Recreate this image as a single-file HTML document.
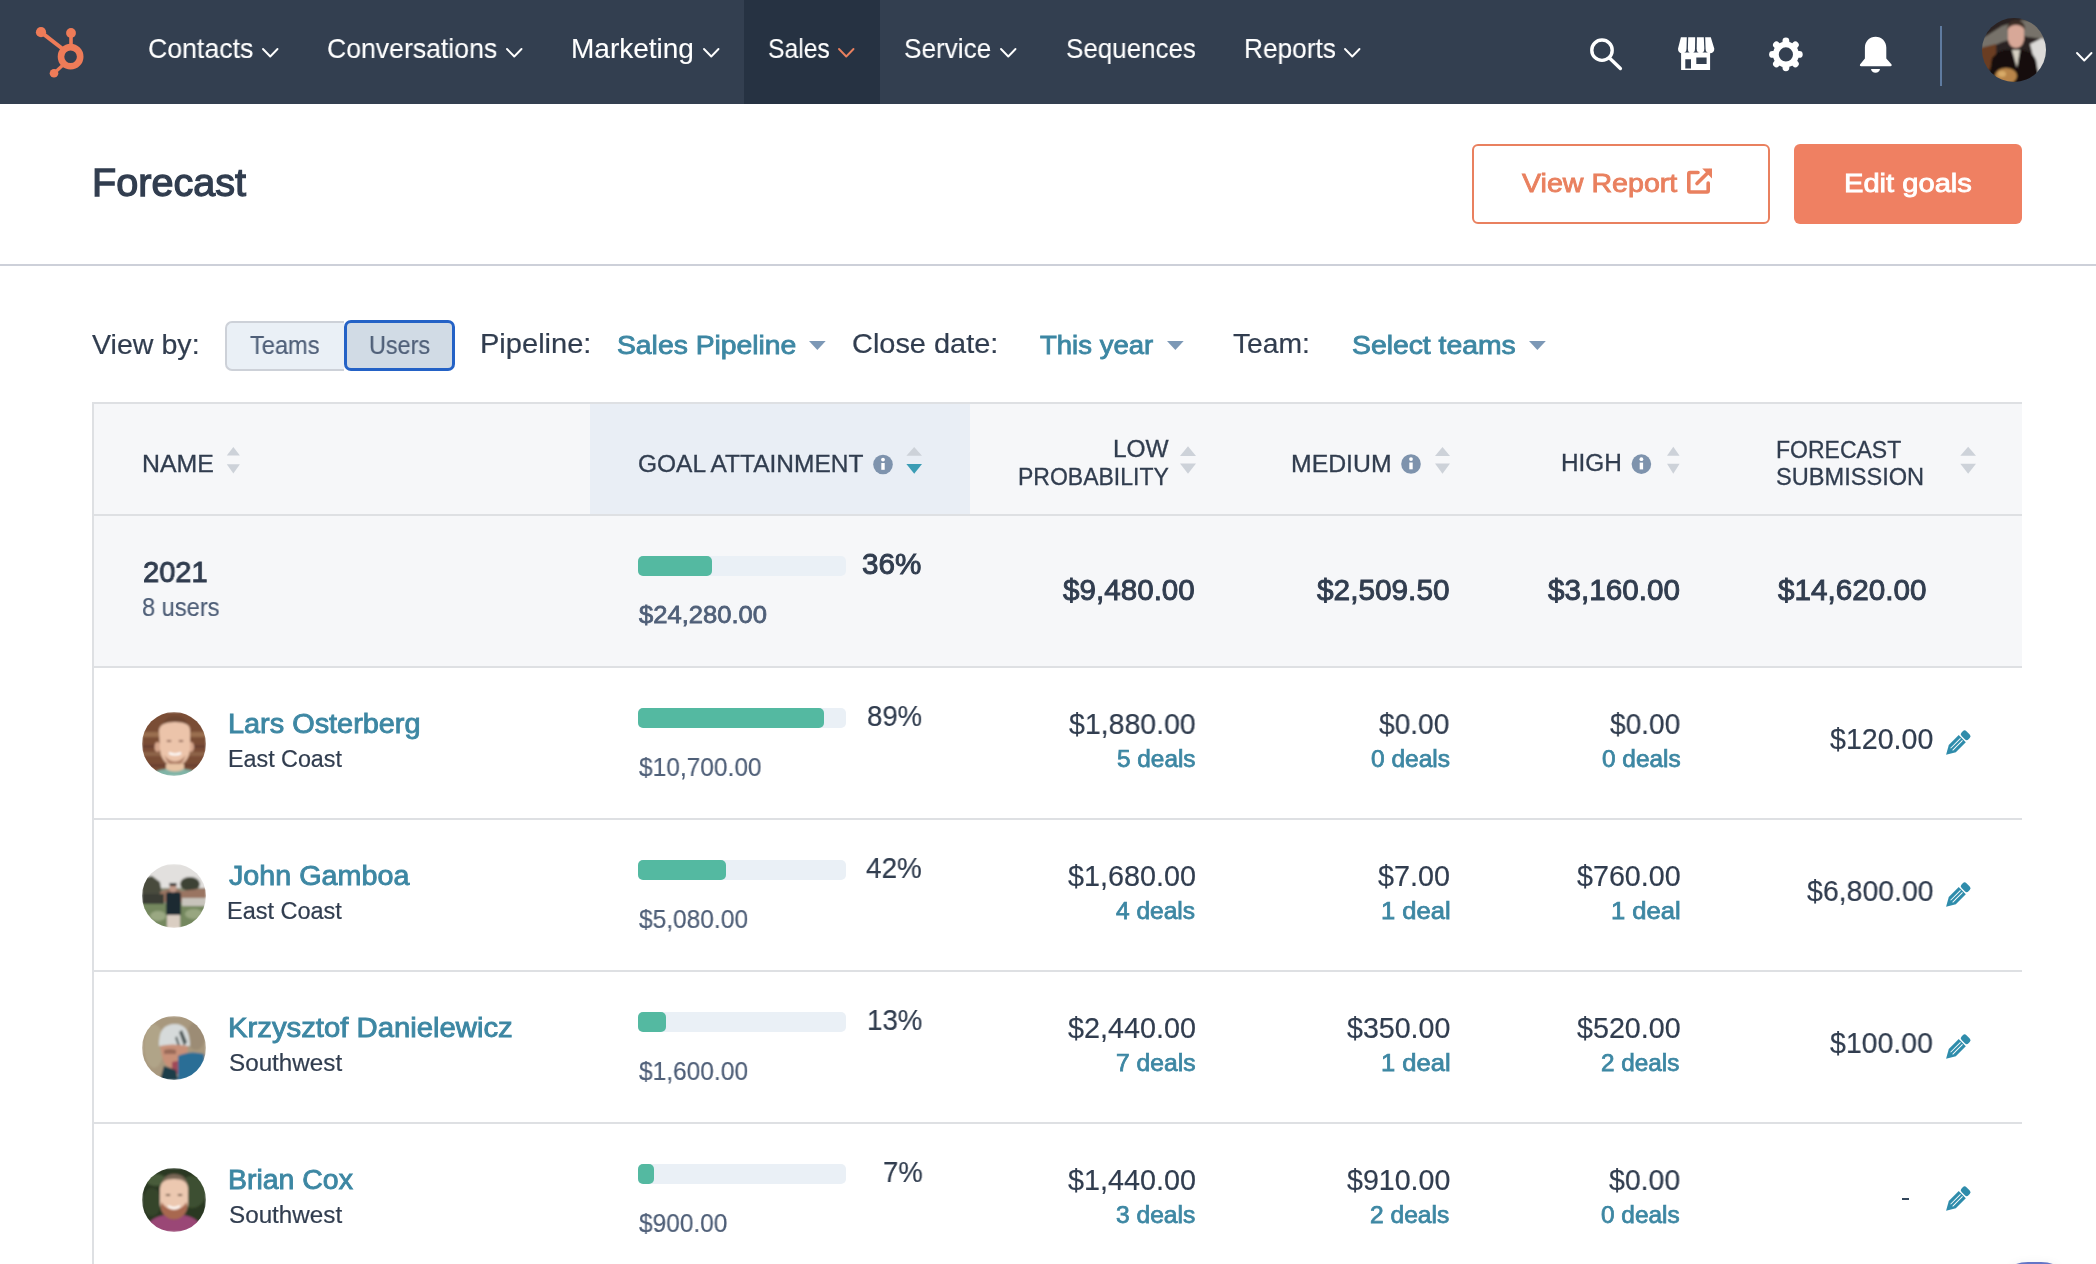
<!DOCTYPE html>
<html><head><meta charset="utf-8">
<style>
html,body{margin:0;padding:0;}
body{width:2096px;height:1264px;overflow:hidden;position:relative;background:#fff;font-family:"Liberation Sans",sans-serif;}
.a{position:absolute;display:block;}
.t{position:absolute;line-height:1;white-space:pre;transform-origin:0 0;will-change:transform;}
</style></head><body>
<!-- NAV -->
<div class="a" style="left:0;top:0;width:2096px;height:104px;background:#333f50"></div>
<div class="a" style="left:744px;top:0;width:136px;height:104px;background:#263242"></div>
<svg class="a" style="left:0;top:0" width="120" height="104">
 <g fill="#ee7b58" stroke="#ee7b58">
  <line x1="41" y1="32.2" x2="66" y2="51.5" stroke-width="4"/>
  <line x1="71" y1="33" x2="71" y2="46" stroke-width="3.6"/>
  <line x1="54" y1="73.3" x2="63" y2="65" stroke-width="3.2"/>
  <circle cx="41" cy="32.2" r="5.1" stroke="none"/>
  <circle cx="71" cy="33" r="4.9" stroke="none"/>
  <circle cx="54" cy="73.3" r="4.3" stroke="none"/>
  <circle cx="70.6" cy="56.7" r="9.6" fill="none" stroke-width="6.6"/>
 </g>
</svg>
<svg class="a" style="left:261px;top:46.5px" width="18.5" height="11.5"><polyline points="2,2 9.25,9.5 16.5,2" fill="none" stroke="#ffffff" stroke-width="1.9" stroke-linecap="round" stroke-linejoin="round"/></svg>
<svg class="a" style="left:505px;top:46.5px" width="18.5" height="11.5"><polyline points="2,2 9.25,9.5 16.5,2" fill="none" stroke="#ffffff" stroke-width="1.9" stroke-linecap="round" stroke-linejoin="round"/></svg>
<svg class="a" style="left:702px;top:46.5px" width="18.5" height="11.5"><polyline points="2,2 9.25,9.5 16.5,2" fill="none" stroke="#ffffff" stroke-width="1.9" stroke-linecap="round" stroke-linejoin="round"/></svg>
<svg class="a" style="left:998.5px;top:46.5px" width="18.5" height="11.5"><polyline points="2,2 9.25,9.5 16.5,2" fill="none" stroke="#ffffff" stroke-width="1.9" stroke-linecap="round" stroke-linejoin="round"/></svg>
<svg class="a" style="left:1343px;top:46.5px" width="18.5" height="11.5"><polyline points="2,2 9.25,9.5 16.5,2" fill="none" stroke="#ffffff" stroke-width="1.9" stroke-linecap="round" stroke-linejoin="round"/></svg>
<svg class="a" style="left:836.8px;top:46.5px" width="18.5" height="11.5"><polyline points="2,2 9.25,9.5 16.5,2" fill="none" stroke="#e8805f" stroke-width="1.9" stroke-linecap="round" stroke-linejoin="round"/></svg>
<svg class="a" style="left:2075px;top:50.5px" width="18.5" height="11.5"><polyline points="2,2 9.25,9.5 16.5,2" fill="none" stroke="#ffffff" stroke-width="1.9" stroke-linecap="round" stroke-linejoin="round"/></svg>
<!-- right icons -->
<svg class="a" style="left:1570px;top:20px" width="526" height="70">
 <g fill="none" stroke="#fff" stroke-width="3.4" stroke-linecap="round">
  <circle cx="32" cy="30.2" r="10.2"/>
  <line x1="40" y1="38.5" x2="50.4" y2="48.5"/>
 </g>
</svg>
<svg class="a" style="left:1670px;top:30px" width="52" height="48" viewBox="0 0 52 48">
 <g fill="#fff">
  <path d="M10.9 7.2 H16.8 L16.5 18.8 Q16.5 23.2 12.25 23.2 Q8 23.2 8 18.8 Z"/>
  <path d="M18.2 7.2 H25.2 L25 18.8 Q25 23.2 21.45 23.2 Q17.9 23.2 17.9 18.8 Z"/>
  <path d="M26.9 7.2 H33.8 L34.3 18.8 Q34.3 23.2 30.5 23.2 Q26.7 23.2 26.7 18.8 Z"/>
  <path d="M35.2 7.2 H40.8 L44.3 18.8 Q44.3 23.2 39.9 23.2 Q35.6 23.2 35.6 18.8 Z"/>
 </g>
 <path fill="#fff" fill-rule="evenodd" d="M11.1 22.4 H40.1 V40 H11.1 Z M15.3 29.3 V38.5 H21 V29.3 Z M26.3 27.4 V33.9 H36.6 V27.4 Z"/>
 
</svg>
<svg class="a" style="left:1760px;top:30px" width="52" height="50" viewBox="0 0 52 50">
 <g transform="translate(25.9 24.4)" fill="#fff">
  <path fill-rule="evenodd" d="M0 -13 A13 13 0 1 1 0 13 A13 13 0 1 1 0 -13 Z M0 -7.1 A7.1 7.1 0 1 0 0 7.1 A7.1 7.1 0 1 0 0 -7.1 Z"/>
  <g id="tooth"><rect x="-3.4" y="-16.8" width="6.8" height="7.4" rx="3.4"/></g>
  <use href="#tooth" transform="rotate(45)"/><use href="#tooth" transform="rotate(90)"/><use href="#tooth" transform="rotate(135)"/>
  <use href="#tooth" transform="rotate(180)"/><use href="#tooth" transform="rotate(225)"/><use href="#tooth" transform="rotate(270)"/><use href="#tooth" transform="rotate(315)"/>
 </g>
</svg>
<svg class="a" style="left:1850px;top:30px" width="50" height="50" viewBox="0 0 50 50">
 <path fill="#fff" d="M25.6 6.8 C31.6 6.8 36.3 11.5 36.3 17.5 V28.5 L41.6 34.5 Q42.2 36.2 40.5 36.2 H11 Q9.3 36.2 10 34.5 L14.9 28.5 V17.5 C14.9 11.5 19.6 6.8 25.6 6.8 Z"/>
 <path fill="#fff" d="M21 38.9 H30 Q29.2 42.7 25.5 42.7 Q21.8 42.7 21 38.9 Z"/>
</svg>
<div class="a" style="left:1940px;top:26px;width:2px;height:60px;background:#5f7ba0"></div>
<svg class="a" style="left:1982px;top:18px" width="64" height="64" viewBox="0 0 64 64">
 <defs><clipPath id="av0"><circle cx="32" cy="32" r="32"/></clipPath><filter id="fav0"><feGaussianBlur stdDeviation="0.8"/></filter></defs>
 <g clip-path="url(#av0)"><g filter="url(#fav0)">
  <rect x="-2" y="-2" width="68" height="68" fill="#2a2420"/>
  <path d="M-2 22 L20 8 L40 2 L66 4 L66 22 L40 18 L20 24 L-2 34Z" fill="#77726a"/>
  <path d="M-2 30 L14 26 L14 50 L-2 54Z" fill="#6a3e22"/>
  <path d="M48 26 L60 20 L66 24 L66 52 L56 58Z" fill="#dcdad8"/>
  <path d="M26 12 Q26 4 34 4 Q42 4 42 12 L42 22 Q40 30 34 30 Q28 30 26 22Z" fill="#d8a898"/>
  <path d="M25 12 Q26 2 34 2 Q43 2 43 12 Q40 7 34 7 Q28 7 25 12Z" fill="#3e2e26"/>
  <path d="M6 66 L10 40 Q18 30 30 32 L38 32 Q50 32 54 42 L58 66Z" fill="#141110"/>
  <path d="M30 32 L38 32 L35 50Z" fill="#d6d0c2"/>
  <ellipse cx="24" cy="58" rx="11" ry="8" fill="#b88448"/><ellipse cx="20" cy="56" rx="4" ry="3" fill="#d8aa68"/>
 </g></g>
</svg>

<!-- HEADER -->
<div class="a" style="left:1472px;top:144px;width:294px;height:76px;border:2px solid #e9805f;border-radius:6px;background:#fff"></div>
<svg class="a" style="left:1684px;top:166px" width="32" height="30" viewBox="0 0 32 30">
 <g fill="none" stroke="#e9805f" stroke-width="3.6" stroke-linecap="round" stroke-linejoin="round">
  <path d="M14 6.5 H6 Q4.8 6.5 4.8 7.7 V24.8 Q4.8 26 6 26 H23 Q24.2 26 24.2 24.8 V17"/>
  <path d="M13 17.5 L25.8 4.7"/>
 </g>
 <path fill="#e9805f" d="M18.2 2.6 H28 V12.4 Z"/>
</svg>
<div class="a" style="left:1794px;top:144px;width:228px;height:80px;background:#ef8062;border-radius:6px"></div>
<div class="a" style="left:0;top:264px;width:2096px;height:2px;background:#cdd0d9"></div>

<!-- FILTERS -->
<div class="a" style="left:225px;top:320.5px;width:117px;height:46.7px;background:#eaf0f6;border:2px solid #cdd1d8;border-right:none;border-radius:7px 0 0 7px"></div>
<div class="a" style="left:344px;top:320px;width:105px;height:45px;background:#d1dbe5;border:3px solid #2462c6;border-radius:7px"></div>
<svg class="a" style="left:800px;top:335px" width="1000" height="20">
 <g fill="#7c98b6">
  <path d="M9 6 H25.7 L17.35 15 Z"/>
  <path d="M367 6 H383.7 L375.35 15 Z"/>
  <path d="M729 6 H745.8 L737.4 15 Z"/>
 </g>
</svg>

<!-- TABLE -->
<div class="a" style="left:92px;top:402px;width:1930px;height:2px;background:#dee0e3"></div>
<div class="a" style="left:92px;top:402px;width:2px;height:862px;background:#dee0e3"></div>
<div class="a" style="left:94px;top:404px;width:1928px;height:110px;background:#f6f7f9"></div>
<div class="a" style="left:590px;top:404px;width:380px;height:110px;background:#e9eef5"></div>
<div class="a" style="left:94px;top:514px;width:1928px;height:2px;background:#dee0e3"></div>
<div class="a" style="left:94px;top:516px;width:1928px;height:150px;background:#f6f7f9"></div>
<div class="a" style="left:94px;top:666px;width:1928px;height:2px;background:#dee0e3"></div>
<div class="a" style="left:94px;top:818px;width:1928px;height:2px;background:#dee0e3"></div>
<div class="a" style="left:94px;top:970px;width:1928px;height:2px;background:#dee0e3"></div>
<div class="a" style="left:94px;top:1122px;width:1928px;height:2px;background:#dee0e3"></div>

<!-- sort icons & info -->
<svg class="a" style="left:0;top:430px" width="2096" height="60">
 <g fill="#cdd2d9">
  <path d="M226.8 25.6 L233.35 17 L239.9 25.6 Z"/><path d="M226.8 34.2 H239.9 L233.35 43.5 Z"/>
  <path d="M906.4 25.7 L914.2 17 L922 25.7 Z"/>
  <path d="M1180 26 L1188 16.3 L1196 26 Z"/><path d="M1180 33.5 H1196 L1188 43.8 Z"/>
  <path d="M1435 26 L1442.5 17 L1450 26 Z"/><path d="M1435 33.5 H1450 L1442.5 43.8 Z"/>
  <path d="M1667 25.8 L1673.3 16.7 L1679.6 25.8 Z"/><path d="M1667 33.7 H1679.6 L1673.3 43.7 Z"/>
  <path d="M1960.3 25.8 L1968.15 16.7 L1976 25.8 Z"/><path d="M1960.3 33.7 H1976 L1968.15 43.7 Z"/>
 </g>
 <path fill="#3b9db5" d="M906.4 33.9 H922 L914.2 43.7 Z"/>
 <g fill="#7e93ad">
  <circle cx="883" cy="34.5" r="9.8"/><circle cx="1411" cy="34" r="9.8"/><circle cx="1641.4" cy="34.1" r="9.8"/>
 </g>
 <g fill="#fff">
  <rect x="881.3" y="33" width="3.4" height="6.8"/><circle cx="883" cy="29.6" r="1.9"/>
  <rect x="1409.3" y="32.5" width="3.4" height="6.8"/><circle cx="1411" cy="29.1" r="1.9"/>
  <rect x="1639.7" y="32.6" width="3.4" height="6.8"/><circle cx="1641.4" cy="29.2" r="1.9"/>
 </g>
</svg>

<!-- progress bars -->
<div class="a" style="left:638px;top:556px;width:208px;height:20px;background:#eaf0f6;border-radius:5px"></div>
<div class="a" style="left:638px;top:556px;width:74px;height:20px;background:#54b9a1;border-radius:5px"></div>
<div class="a" style="left:638px;top:708px;width:208px;height:20px;background:#eaf0f6;border-radius:5px"></div>
<div class="a" style="left:638px;top:708px;width:185.8px;height:20px;background:#54b9a1;border-radius:5px"></div>
<div class="a" style="left:638px;top:860px;width:208px;height:20px;background:#eaf0f6;border-radius:5px"></div>
<div class="a" style="left:638px;top:860px;width:88.2px;height:20px;background:#54b9a1;border-radius:5px"></div>
<div class="a" style="left:638px;top:1012px;width:208px;height:20px;background:#eaf0f6;border-radius:5px"></div>
<div class="a" style="left:638px;top:1012px;width:28.0px;height:20px;background:#54b9a1;border-radius:5px"></div>
<div class="a" style="left:638px;top:1164px;width:208px;height:20px;background:#eaf0f6;border-radius:5px"></div>
<div class="a" style="left:638px;top:1164px;width:15.7px;height:20px;background:#54b9a1;border-radius:5px"></div>
<svg class="a" style="left:142px;top:712px" width="64" height="64" viewBox="0 0 64 64"><defs><clipPath id="c0"><circle cx="32" cy="32" r="32"/></clipPath><filter id="f0" x="-10%" y="-10%" width="120%" height="120%"><feGaussianBlur stdDeviation="0.9"/></filter></defs><g clip-path="url(#c0)"><g filter="url(#f0)"><rect width="64" height="64" fill="#7a4e36"/>
 <rect y="20" width="64" height="5" fill="#9a6e50"/><rect y="33" width="64" height="3" fill="#6a4030"/><rect y="40" width="64" height="4" fill="#8e6448"/><rect y="52" width="64" height="3" fill="#6a4030"/>
 <path d="M20 20 Q20 4 33 4 Q47 4 47 20 L46 14 Q40 10 33 10 Q25 10 20 15Z" fill="#6e4630"/>
 <ellipse cx="15.5" cy="35" rx="3" ry="5" fill="#d8a88e"/><ellipse cx="49" cy="35" rx="3" ry="5" fill="#d8a88e"/>
 <path d="M17 18 Q18 10 33 10 Q48 10 48 18 L48 38 Q46 53 33 54 Q20 53 18 38Z" fill="#ecc4aa"/>
 <path d="M22 43 Q33 56 44 43 Q40 54 33 55 Q26 54 22 43Z" fill="#b08068"/>
 <ellipse cx="27" cy="29" rx="2.5" ry="1" fill="#8a6050"/><ellipse cx="39" cy="29" rx="2.5" ry="1" fill="#8a6050"/>
 <path d="M27 41 Q33 44 39 41" stroke="#fff" stroke-width="2" fill="none"/>
 <rect x="24" y="52" width="18" height="10" fill="#e8c4a4"/>
 <path d="M8 64 Q12 58 24 57 Q33 62 42 57 Q54 58 58 64Z" fill="#80b4a6"/></g></g></svg>
<svg class="a" style="left:142px;top:864px" width="64" height="64" viewBox="0 0 64 64"><defs><clipPath id="c1"><circle cx="32" cy="32" r="32"/></clipPath><filter id="f1" x="-10%" y="-10%" width="120%" height="120%"><feGaussianBlur stdDeviation="0.9"/></filter></defs><g clip-path="url(#c1)"><g filter="url(#f1)"><rect width="64" height="64" fill="#8a8e78"/><rect width="64" height="24" fill="#e2e0de"/>
 <path d="M0 14 L10 12 L18 18 L20 30 L0 32Z" fill="#4a4c3e"/>
 <ellipse cx="48" cy="20" rx="10" ry="7" fill="#3e4234"/>
 <path d="M18 28 Q30 22 40 27 L64 24 L64 38 L18 38Z" fill="#9a7462"/>
 <rect x="0" y="30" width="22" height="14" fill="#3a3c34"/>
 <rect x="0" y="40" width="64" height="24" fill="#74885e"/>
 <ellipse cx="16" cy="52" rx="8" ry="5" fill="#9aa882"/><ellipse cx="52" cy="50" rx="9" ry="5" fill="#98a680"/>
 <path d="M40 34 L64 34 L64 42 L40 42Z" fill="#c8c4bc"/>
 <rect x="24" y="28" width="15" height="24" rx="3" fill="#1e2a30"/>
 <ellipse cx="31" cy="24" rx="3.5" ry="4.5" fill="#c09888"/><rect x="27.5" y="19" width="7" height="3" fill="#2a2a2a"/>
 <rect x="25" y="51" width="13" height="13" fill="#dacec2"/></g></g></svg>
<svg class="a" style="left:142px;top:1016px" width="64" height="64" viewBox="0 0 64 64"><defs><clipPath id="c2"><circle cx="32" cy="32" r="32"/></clipPath><filter id="f2" x="-10%" y="-10%" width="120%" height="120%"><feGaussianBlur stdDeviation="0.9"/></filter></defs><g clip-path="url(#c2)"><g filter="url(#f2)"><rect width="64" height="64" fill="#a8987e"/>
 <ellipse cx="12" cy="30" rx="10" ry="22" fill="#b0a488"/><ellipse cx="54" cy="20" rx="9" ry="14" fill="#9c8c74"/>
 <path d="M17 30 Q16 8 33 8 Q48 8 48 30Z" fill="#d6dada"/>
 <path d="M40 14 L45 26 L42 30 L37 16Z" fill="#505a5a"/><path d="M35 20 L39 32 L37 33 L33 22Z" fill="#606a6a"/>
 <path d="M18 30 Q30 27 46 30 L45 40 Q43 52 33 53 Q22 52 20 40Z" fill="#c89078"/>
 <path d="M22 34 Q28 32 34 34 L34 38 L22 38Z" fill="#9a6a58"/>
 <path d="M30 46 L40 44 L40 58 L30 58Z" fill="#a04858"/>
 <path d="M36 40 Q48 34 62 38 L64 64 L36 64Z" fill="#2a6e96"/>
 <path d="M18 64 L22 50 L34 54 L36 64Z" fill="#1e3c48"/></g></g></svg>
<svg class="a" style="left:142px;top:1168px" width="64" height="64" viewBox="0 0 64 64"><defs><clipPath id="c3"><circle cx="32" cy="32" r="32"/></clipPath><filter id="f3" x="-10%" y="-10%" width="120%" height="120%"><feGaussianBlur stdDeviation="0.9"/></filter></defs><g clip-path="url(#c3)"><g filter="url(#f3)"><rect width="64" height="64" fill="#2c3824"/>
 <ellipse cx="50" cy="24" rx="14" ry="16" fill="#3c5030"/><ellipse cx="10" cy="34" rx="9" ry="14" fill="#36442c"/><ellipse cx="14" cy="12" rx="10" ry="6" fill="#485c3a"/>
 <path d="M19 20 Q20 6 32 6 Q45 6 46 20 Q42 12 32 12 Q22 12 19 20Z" fill="#7a6856"/>
 <path d="M18 20 Q19 11 32 11 Q45 11 46 20 L46 36 Q44 50 32 51 Q20 50 18 36Z" fill="#ecc8b0"/>
 <path d="M19 34 Q32 50 45 34 L45 40 Q42 52 32 52 Q22 52 19 40Z" fill="#a86850"/>
 <ellipse cx="26" cy="27" rx="2.5" ry="1" fill="#6a5040"/><ellipse cx="38" cy="27" rx="2.5" ry="1" fill="#6a5040"/>
 <path d="M26 38 Q32 42 38 38" stroke="#fff" stroke-width="2" fill="none"/>
 <path d="M2 64 Q6 50 22 47 Q32 56 42 47 Q58 50 62 64Z" fill="#9a4676"/></g></g></svg>
<svg class="a" style="left:1936px;top:720px" width="44" height="44" viewBox="0 0 44 44">
 <g transform="translate(10.3 34.6) rotate(45)">
  <path fill="#2f8cab" d="M0 0.3 L-5 -8.5 V-22.6 H5 V-8.5 Z"/>
  <rect x="-4.9" y="-30.8" width="9.8" height="6.9" rx="2.6" fill="#2f8cab"/>
  <rect x="-1.9" y="-21.5" width="0.9" height="14" fill="#fff"/>
  <rect x="1.0" y="-21.5" width="0.9" height="14" fill="#fff"/>
 </g>
</svg>
<svg class="a" style="left:1936px;top:872px" width="44" height="44" viewBox="0 0 44 44">
 <g transform="translate(10.3 34.6) rotate(45)">
  <path fill="#2f8cab" d="M0 0.3 L-5 -8.5 V-22.6 H5 V-8.5 Z"/>
  <rect x="-4.9" y="-30.8" width="9.8" height="6.9" rx="2.6" fill="#2f8cab"/>
  <rect x="-1.9" y="-21.5" width="0.9" height="14" fill="#fff"/>
  <rect x="1.0" y="-21.5" width="0.9" height="14" fill="#fff"/>
 </g>
</svg>
<svg class="a" style="left:1936px;top:1024px" width="44" height="44" viewBox="0 0 44 44">
 <g transform="translate(10.3 34.6) rotate(45)">
  <path fill="#2f8cab" d="M0 0.3 L-5 -8.5 V-22.6 H5 V-8.5 Z"/>
  <rect x="-4.9" y="-30.8" width="9.8" height="6.9" rx="2.6" fill="#2f8cab"/>
  <rect x="-1.9" y="-21.5" width="0.9" height="14" fill="#fff"/>
  <rect x="1.0" y="-21.5" width="0.9" height="14" fill="#fff"/>
 </g>
</svg>
<svg class="a" style="left:1936px;top:1176px" width="44" height="44" viewBox="0 0 44 44">
 <g transform="translate(10.3 34.6) rotate(45)">
  <path fill="#2f8cab" d="M0 0.3 L-5 -8.5 V-22.6 H5 V-8.5 Z"/>
  <rect x="-4.9" y="-30.8" width="9.8" height="6.9" rx="2.6" fill="#2f8cab"/>
  <rect x="-1.9" y="-21.5" width="0.9" height="14" fill="#fff"/>
  <rect x="1.0" y="-21.5" width="0.9" height="14" fill="#fff"/>
 </g>
</svg>
<div class="t" style="left:147.67px;top:34.60px;font-size:28.00px;color:#ffffff;-webkit-text-stroke:0.1px #ffffff;transform:scaleX(0.9530);">Contacts</div>
<div class="t" style="left:326.67px;top:34.60px;font-size:28.00px;color:#ffffff;-webkit-text-stroke:0.1px #ffffff;transform:scaleX(0.9509);">Conversations</div>
<div class="t" style="left:570.76px;top:34.60px;font-size:28.00px;color:#ffffff;-webkit-text-stroke:0.1px #ffffff;">Marketing</div>
<div class="t" style="left:768.01px;top:34.60px;font-size:28.00px;color:#ffffff;-webkit-text-stroke:0.1px #ffffff;transform:scaleX(0.8818);">Sales</div>
<div class="t" style="left:903.95px;top:34.60px;font-size:28.00px;color:#ffffff;-webkit-text-stroke:0.1px #ffffff;transform:scaleX(0.9341);">Service</div>
<div class="t" style="left:1065.96px;top:34.60px;font-size:28.00px;color:#ffffff;-webkit-text-stroke:0.1px #ffffff;transform:scaleX(0.9273);">Sequences</div>
<div class="t" style="left:1243.90px;top:34.60px;font-size:28.00px;color:#ffffff;-webkit-text-stroke:0.1px #ffffff;transform:scaleX(0.9376);">Reports</div>
<div class="t" style="left:92.03px;top:162.53px;font-size:39.50px;color:#313d4f;-webkit-text-stroke:1.27px #313d4f;transform:scaleX(1.0027);">Forecast</div>
<div class="t" style="left:1522.37px;top:169.70px;font-size:26.00px;color:#e9805f;-webkit-text-stroke:0.84px #e9805f;transform:scaleX(1.1003);">View Report</div>
<div class="t" style="left:1843.76px;top:169.90px;font-size:26.00px;color:#ffffff;-webkit-text-stroke:0.84px #ffffff;transform:scaleX(1.1199);">Edit goals</div>
<div class="t" style="left:92.40px;top:330.62px;font-size:27.50px;color:#313d4f;-webkit-text-stroke:0.2px #313d4f;transform:scaleX(1.0404);">View by:</div>
<div class="t" style="left:249.93px;top:332.75px;font-size:25.00px;color:#4f5f78;-webkit-text-stroke:0.2px #4f5f78;transform:scaleX(0.9426);">Teams</div>
<div class="t" style="left:368.86px;top:332.75px;font-size:25.00px;color:#4f5f78;-webkit-text-stroke:0.2px #4f5f78;transform:scaleX(0.9355);">Users</div>
<div class="t" style="left:480.08px;top:330.43px;font-size:27.50px;color:#313d4f;-webkit-text-stroke:0.2px #313d4f;transform:scaleX(1.0562);">Pipeline:</div>
<div class="t" style="left:617.35px;top:331.53px;font-size:26.20px;color:#3d87a3;-webkit-text-stroke:0.84px #3d87a3;transform:scaleX(1.0806);">Sales Pipeline</div>
<div class="t" style="left:852.05px;top:330.43px;font-size:27.50px;color:#313d4f;-webkit-text-stroke:0.2px #313d4f;transform:scaleX(1.0517);">Close date:</div>
<div class="t" style="left:1040.32px;top:331.53px;font-size:26.20px;color:#3d87a3;-webkit-text-stroke:0.84px #3d87a3;transform:scaleX(1.0510);">This year</div>
<div class="t" style="left:1233.44px;top:330.43px;font-size:27.50px;color:#313d4f;-webkit-text-stroke:0.2px #313d4f;transform:scaleX(1.0271);">Team:</div>
<div class="t" style="left:1352.15px;top:331.53px;font-size:26.20px;color:#3d87a3;-webkit-text-stroke:0.84px #3d87a3;transform:scaleX(1.0818);">Select teams</div>
<div class="t" style="left:141.81px;top:452.55px;font-size:23.00px;color:#313d4f;-webkit-text-stroke:0.3px #313d4f;transform:scaleX(1.0815);">NAME</div>
<div class="t" style="left:637.72px;top:452.75px;font-size:23.00px;color:#313d4f;-webkit-text-stroke:0.3px #313d4f;transform:scaleX(1.0649);">GOAL ATTAINMENT</div>
<div class="t" style="left:1112.54px;top:438.25px;font-size:23.00px;color:#313d4f;-webkit-text-stroke:0.3px #313d4f;transform:scaleX(1.0632);">LOW</div>
<div class="t" style="left:1017.66px;top:466.45px;font-size:23.00px;color:#313d4f;-webkit-text-stroke:0.3px #313d4f;">PROBABILITY</div>
<div class="t" style="left:1291.02px;top:452.65px;font-size:23.00px;color:#313d4f;-webkit-text-stroke:0.3px #313d4f;transform:scaleX(1.0780);">MEDIUM</div>
<div class="t" style="left:1560.75px;top:452.45px;font-size:23.00px;color:#313d4f;-webkit-text-stroke:0.3px #313d4f;transform:scaleX(1.0583);">HIGH</div>
<div class="t" style="left:1775.56px;top:438.65px;font-size:23.00px;color:#313d4f;-webkit-text-stroke:0.3px #313d4f;transform:scaleX(0.9980);">FORECAST</div>
<div class="t" style="left:1776.46px;top:466.05px;font-size:23.00px;color:#313d4f;-webkit-text-stroke:0.3px #313d4f;transform:scaleX(1.0253);">SUBMISSION</div>
<div class="t" style="left:142.73px;top:557.12px;font-size:29.50px;color:#313d4f;-webkit-text-stroke:0.95px #313d4f;transform:scaleX(0.9840);">2021</div>
<div class="t" style="left:142.26px;top:594.65px;font-size:25.00px;color:#4f5f78;-webkit-text-stroke:0.2px #4f5f78;transform:scaleX(0.9445);">8 users</div>
<div class="t" style="left:862.11px;top:548.91px;font-size:29.40px;color:#313d4f;-webkit-text-stroke:0.95px #313d4f;transform:scaleX(1.0083);">36%</div>
<div class="t" style="left:639.26px;top:603.09px;font-size:24.60px;color:#4f5f78;-webkit-text-stroke:0.79px #4f5f78;transform:scaleX(1.0395);">$24,280.00</div>
<div class="t" style="left:1063.00px;top:575.69px;font-size:28.60px;color:#313d4f;-webkit-text-stroke:0.92px #313d4f;transform:scaleX(1.0364);">$9,480.00</div>
<div class="t" style="left:1317.30px;top:575.69px;font-size:28.60px;color:#313d4f;-webkit-text-stroke:0.92px #313d4f;transform:scaleX(1.0419);">$2,509.50</div>
<div class="t" style="left:1548.10px;top:575.69px;font-size:28.60px;color:#313d4f;-webkit-text-stroke:0.92px #313d4f;transform:scaleX(1.0371);">$3,160.00</div>
<div class="t" style="left:1778.00px;top:575.69px;font-size:28.60px;color:#313d4f;-webkit-text-stroke:0.92px #313d4f;transform:scaleX(1.0370);">$14,620.00</div>
<div class="t" style="left:228.28px;top:711.02px;font-size:26.80px;color:#3d87a3;-webkit-text-stroke:0.86px #3d87a3;transform:scaleX(1.0772);">Lars Osterberg</div>
<div class="t" style="left:228.44px;top:747.90px;font-size:23.30px;color:#313d4f;-webkit-text-stroke:0.2px #313d4f;">East Coast</div>
<div class="t" style="left:866.50px;top:700.80px;font-size:30.00px;color:#313d4f;-webkit-text-stroke:0.2px #313d4f;transform:scaleX(0.9188);">89%</div>
<div class="t" style="left:638.76px;top:754.54px;font-size:25.60px;color:#4f5f78;-webkit-text-stroke:0.2px #4f5f78;transform:scaleX(0.9569);">$10,700.00</div>
<div class="t" style="left:1068.72px;top:709.69px;font-size:28.60px;color:#313d4f;-webkit-text-stroke:0.2px #313d4f;transform:scaleX(0.9957);">$1,880.00</div>
<div class="t" style="left:1116.51px;top:748.20px;font-size:23.30px;color:#3d87a3;-webkit-text-stroke:0.75px #3d87a3;transform:scaleX(1.0454);">5 deals</div>
<div class="t" style="left:1379.42px;top:709.69px;font-size:28.60px;color:#313d4f;-webkit-text-stroke:0.2px #313d4f;transform:scaleX(0.9821);">$0.00</div>
<div class="t" style="left:1371.11px;top:748.20px;font-size:23.30px;color:#3d87a3;-webkit-text-stroke:0.75px #3d87a3;transform:scaleX(1.0521);">0 deals</div>
<div class="t" style="left:1609.72px;top:709.69px;font-size:28.60px;color:#313d4f;-webkit-text-stroke:0.2px #313d4f;transform:scaleX(0.9807);">$0.00</div>
<div class="t" style="left:1601.91px;top:748.20px;font-size:23.30px;color:#3d87a3;-webkit-text-stroke:0.75px #3d87a3;transform:scaleX(1.0467);">0 deals</div>
<div class="t" style="left:1829.91px;top:724.89px;font-size:28.60px;color:#313d4f;-webkit-text-stroke:0.2px #313d4f;">$120.00</div>
<div class="t" style="left:229.20px;top:863.02px;font-size:26.80px;color:#3d87a3;-webkit-text-stroke:0.86px #3d87a3;transform:scaleX(1.0714);">John Gamboa</div>
<div class="t" style="left:227.32px;top:899.90px;font-size:23.30px;color:#313d4f;-webkit-text-stroke:0.2px #313d4f;transform:scaleX(1.0074);">East Coast</div>
<div class="t" style="left:866.34px;top:852.80px;font-size:30.00px;color:#313d4f;-webkit-text-stroke:0.2px #313d4f;transform:scaleX(0.9299);">42%</div>
<div class="t" style="left:639.05px;top:906.54px;font-size:25.60px;color:#4f5f78;-webkit-text-stroke:0.2px #4f5f78;transform:scaleX(0.9570);">$5,080.00</div>
<div class="t" style="left:1068.01px;top:861.69px;font-size:28.60px;color:#313d4f;-webkit-text-stroke:0.2px #313d4f;transform:scaleX(1.0060);">$1,680.00</div>
<div class="t" style="left:1116.26px;top:900.20px;font-size:23.30px;color:#3d87a3;-webkit-text-stroke:0.75px #3d87a3;transform:scaleX(1.0515);">4 deals</div>
<div class="t" style="left:1378.21px;top:861.69px;font-size:28.60px;color:#313d4f;-webkit-text-stroke:0.2px #313d4f;transform:scaleX(1.0063);">$7.00</div>
<div class="t" style="left:1381.07px;top:900.20px;font-size:23.30px;color:#3d87a3;-webkit-text-stroke:0.75px #3d87a3;transform:scaleX(1.0968);">1 deal</div>
<div class="t" style="left:1576.51px;top:861.69px;font-size:28.60px;color:#313d4f;-webkit-text-stroke:0.2px #313d4f;transform:scaleX(1.0029);">$760.00</div>
<div class="t" style="left:1610.86px;top:900.20px;font-size:23.30px;color:#3d87a3;-webkit-text-stroke:0.75px #3d87a3;transform:scaleX(1.0984);">1 deal</div>
<div class="t" style="left:1806.72px;top:876.89px;font-size:28.60px;color:#313d4f;-webkit-text-stroke:0.2px #313d4f;transform:scaleX(0.9949);">$6,800.00</div>
<div class="t" style="left:227.85px;top:1015.02px;font-size:26.80px;color:#3d87a3;-webkit-text-stroke:0.86px #3d87a3;transform:scaleX(1.0926);">Krzysztof Danielewicz</div>
<div class="t" style="left:228.93px;top:1051.89px;font-size:23.30px;color:#313d4f;-webkit-text-stroke:0.2px #313d4f;transform:scaleX(1.0401);">Southwest</div>
<div class="t" style="left:866.76px;top:1004.80px;font-size:30.00px;color:#313d4f;-webkit-text-stroke:0.2px #313d4f;transform:scaleX(0.9228);">13%</div>
<div class="t" style="left:639.05px;top:1058.54px;font-size:25.60px;color:#4f5f78;-webkit-text-stroke:0.2px #4f5f78;transform:scaleX(0.9570);">$1,600.00</div>
<div class="t" style="left:1068.01px;top:1013.69px;font-size:28.60px;color:#313d4f;-webkit-text-stroke:0.2px #313d4f;transform:scaleX(1.0060);">$2,440.00</div>
<div class="t" style="left:1115.76px;top:1052.19px;font-size:23.30px;color:#3d87a3;-webkit-text-stroke:0.75px #3d87a3;transform:scaleX(1.0581);">7 deals</div>
<div class="t" style="left:1346.71px;top:1013.69px;font-size:28.60px;color:#313d4f;-webkit-text-stroke:0.2px #313d4f;">$350.00</div>
<div class="t" style="left:1381.07px;top:1052.19px;font-size:23.30px;color:#3d87a3;-webkit-text-stroke:0.75px #3d87a3;transform:scaleX(1.0968);">1 deal</div>
<div class="t" style="left:1576.51px;top:1013.69px;font-size:28.60px;color:#313d4f;-webkit-text-stroke:0.2px #313d4f;transform:scaleX(1.0029);">$520.00</div>
<div class="t" style="left:1601.27px;top:1052.19px;font-size:23.30px;color:#3d87a3;-webkit-text-stroke:0.75px #3d87a3;transform:scaleX(1.0419);">2 deals</div>
<div class="t" style="left:1830.32px;top:1028.89px;font-size:28.60px;color:#313d4f;-webkit-text-stroke:0.2px #313d4f;transform:scaleX(0.9951);">$100.00</div>
<div class="t" style="left:227.91px;top:1167.02px;font-size:26.80px;color:#3d87a3;-webkit-text-stroke:0.86px #3d87a3;transform:scaleX(1.0617);">Brian Cox</div>
<div class="t" style="left:228.93px;top:1203.89px;font-size:23.30px;color:#313d4f;-webkit-text-stroke:0.2px #313d4f;transform:scaleX(1.0401);">Southwest</div>
<div class="t" style="left:882.63px;top:1156.80px;font-size:30.00px;color:#313d4f;-webkit-text-stroke:0.2px #313d4f;transform:scaleX(0.9142);">7%</div>
<div class="t" style="left:639.06px;top:1210.54px;font-size:25.60px;color:#4f5f78;-webkit-text-stroke:0.2px #4f5f78;transform:scaleX(0.9552);">$900.00</div>
<div class="t" style="left:1068.01px;top:1165.69px;font-size:28.60px;color:#313d4f;-webkit-text-stroke:0.2px #313d4f;transform:scaleX(1.0060);">$1,440.00</div>
<div class="t" style="left:1116.01px;top:1204.19px;font-size:23.30px;color:#3d87a3;-webkit-text-stroke:0.75px #3d87a3;transform:scaleX(1.0548);">3 deals</div>
<div class="t" style="left:1346.71px;top:1165.69px;font-size:28.60px;color:#313d4f;-webkit-text-stroke:0.2px #313d4f;">$910.00</div>
<div class="t" style="left:1370.46px;top:1204.19px;font-size:23.30px;color:#3d87a3;-webkit-text-stroke:0.75px #3d87a3;transform:scaleX(1.0541);">2 deals</div>
<div class="t" style="left:1609.02px;top:1165.69px;font-size:28.60px;color:#313d4f;-webkit-text-stroke:0.2px #313d4f;transform:scaleX(0.9935);">$0.00</div>
<div class="t" style="left:1600.91px;top:1204.19px;font-size:23.30px;color:#3d87a3;-webkit-text-stroke:0.75px #3d87a3;transform:scaleX(1.0467);">0 deals</div>
<div class="a" style="left:1902px;top:1198px;width:7px;height:2px;background:#33475b"></div>
<!-- chat widget edge -->
<div class="a" style="left:2010px;top:1261.5px;width:49px;height:40px;border-radius:18px/8px;background:#6475c6;box-shadow:0 0 10px rgba(0,0,0,0.05)"></div>
</body></html>
